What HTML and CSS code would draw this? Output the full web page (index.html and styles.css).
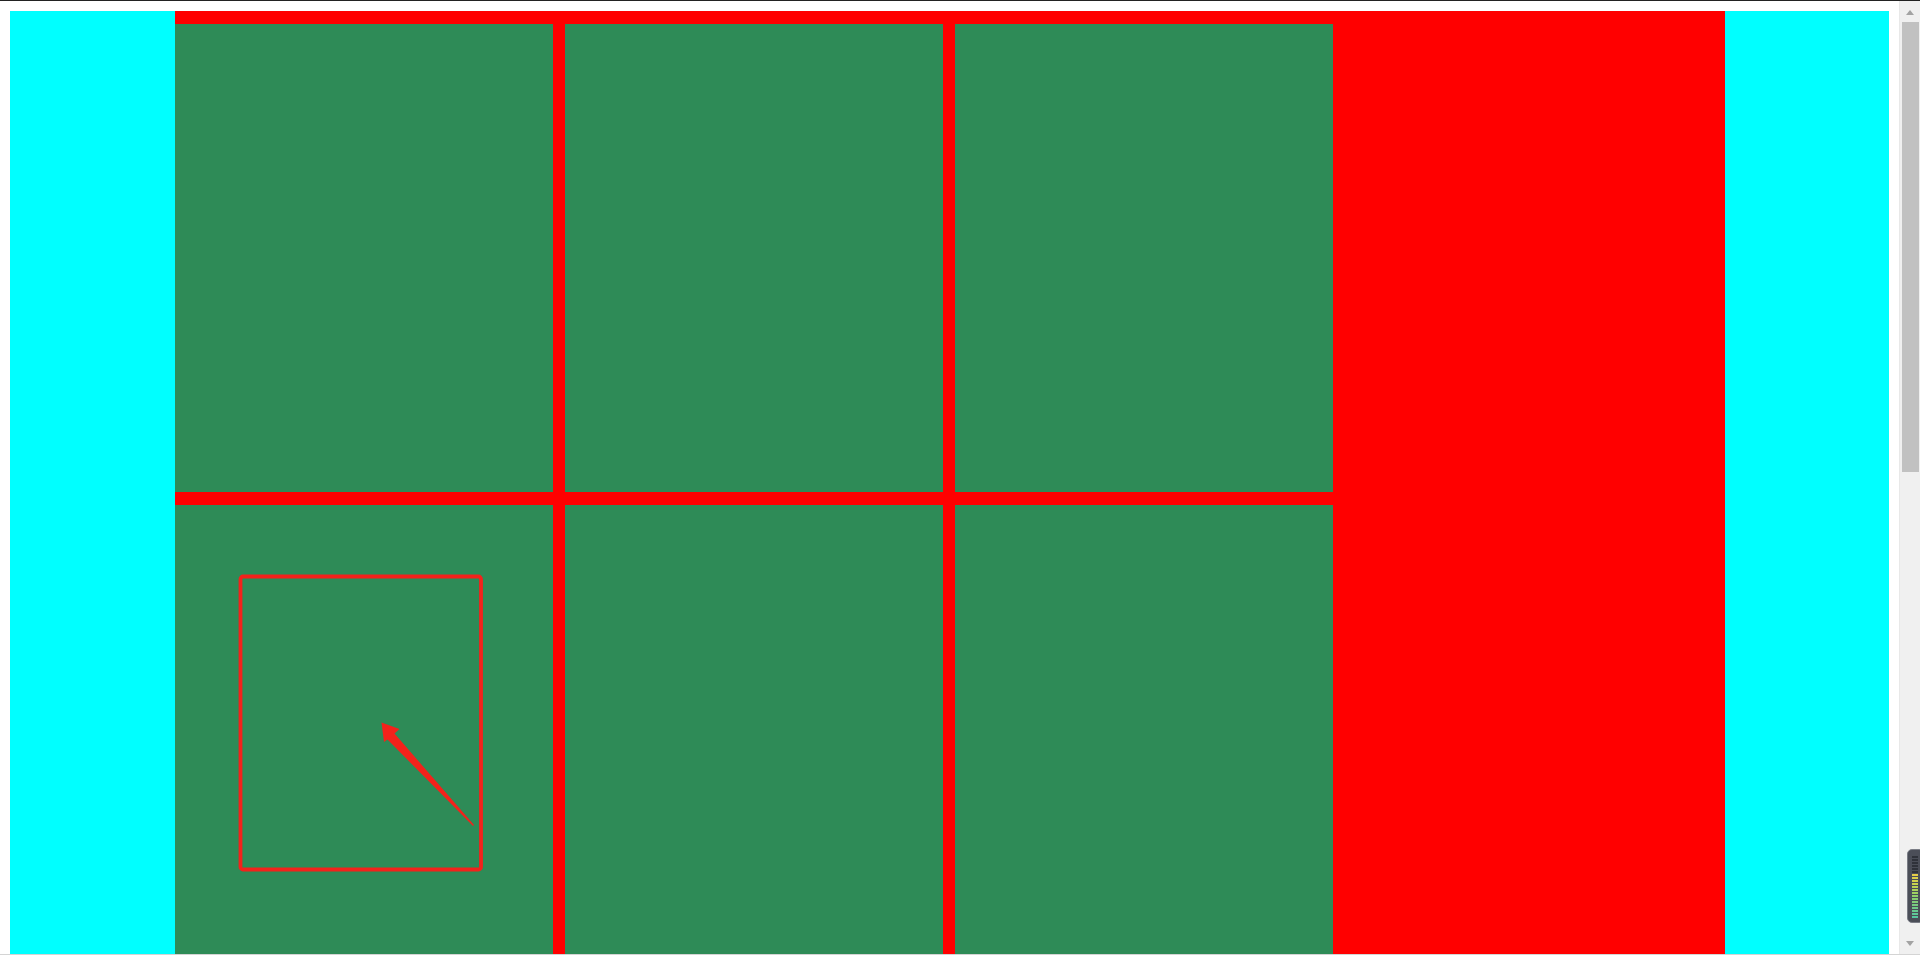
FILE: index.html
```html
<!DOCTYPE html>
<html>
<head>
<meta charset="utf-8">
<link rel="stylesheet" href="styles.css">
</head>
<body>
<div class="topline"></div>
<div class="page">
  <div class="side side-left"></div>
  <div class="main">
    <div class="grid">
      <div class="cell"></div>
      <div class="cell"></div>
      <div class="cell"></div>
      <div class="cell"></div>
      <div class="cell"></div>
      <div class="cell"></div>
      <div class="cell"></div>
      <div class="cell"></div>
      <div class="cell"></div>
      <div class="cell"></div>
      <div class="cell"></div>
      <div class="cell"></div>
    </div>
  </div>
  <div class="side side-right"></div>
</div>
<svg class="annotation" width="1920" height="955" viewBox="0 0 1920 955">
  <rect x="240.5" y="576.5" width="240.5" height="293" rx="2.5" ry="2.5" fill="none" stroke="#f3221b" stroke-width="3.8"/>
  <polygon points="381.5,722.5 399.5,729 394.5,733.5 474,825 473,826 387.5,739.5 384,742" fill="#f3221b"/>
</svg>
<div class="scrollbar">
  <div class="sb-arrow sb-up"></div>
  <div class="sb-thumb"></div>
  <div class="sb-space"></div>
  <div class="sb-arrow sb-down"></div>
</div>
<div class="meter">
  <div class="meter-bars"></div>
</div>
<div class="bottomline"></div>
</body>
</html>
```

FILE: styles.css
```css
html {
  scrollbar-width: none;
}

html::-webkit-scrollbar {
  display: none;
}

html, body {
  margin: 0;
  padding: 0;
  background: #ffffff;
}

body {
  position: relative;
  font-family: "Liberation Sans", Arial, sans-serif;
}

.topline {
  height: 1px;
  background: #222222;
}

.page {
  display: flex;
  align-items: stretch;
  padding: 10px 0 11px 10px;
}

.side {
  background: #00ffff;
}

.side-left {
  width: 165px;
}

.side-right {
  width: 164px;
}

.main {
  width: 1550px;
  background: #ff0000;
  padding: 13px 0;
}

.grid {
  display: grid;
  grid-template-columns: repeat(3, 378px);
  grid-auto-rows: 468px;
  column-gap: 12px;
  row-gap: 13px;
}

.cell {
  background: #2e8b57;
}

.annotation {
  position: absolute;
  left: 0;
  top: 0;
  pointer-events: none;
}

/* simulated browser scrollbar */
.scrollbar {
  position: fixed;
  top: 1px;
  right: 0;
  bottom: 1px;
  width: 21px;
  background: #f0f0f0;
  border-left: 1px solid #e8e8e8;
  box-sizing: border-box;
  display: flex;
  flex-direction: column;
  align-items: center;
}

.sb-arrow {
  width: 0;
  height: 0;
  border-left: 4.5px solid transparent;
  border-right: 4.5px solid transparent;
  flex: none;
}

.sb-up {
  margin-top: 9px;
  border-bottom: 5px solid #a3a3a3;
}

.sb-down {
  margin-bottom: 8px;
  border-top: 5px solid #a3a3a3;
}

.sb-thumb {
  width: 17px;
  height: 450px;
  margin-top: 7px;
  margin-left: 1px;
  background: #c1c1c1;
  flex: none;
}

.sb-space {
  flex: 1;
}

/* small level meter overlay */
.meter {
  position: fixed;
  right: -4px;
  top: 849px;
  width: 17px;
  height: 74px;
  border-radius: 5px;
  background: #4b4e58;
  border: 1px solid #7a7d86;
  box-sizing: border-box;
  padding: 6px 0 0 4px;
}

.meter-bars {
  width: 6px;
  height: 62px;
  background:
    repeating-linear-gradient(to bottom, transparent 0 2px, #4b4e58 2px 3px),
    linear-gradient(to bottom, #2f323a 0, #2f323a 28%, #e8cc48 29%, #c9d44e 45%, #8fd06a 65%, #55c6a2 100%);
}

.bottomline {
  position: fixed;
  left: 0;
  right: 0;
  bottom: 0;
  height: 1px;
  background: #d4d4d4;
}
```
